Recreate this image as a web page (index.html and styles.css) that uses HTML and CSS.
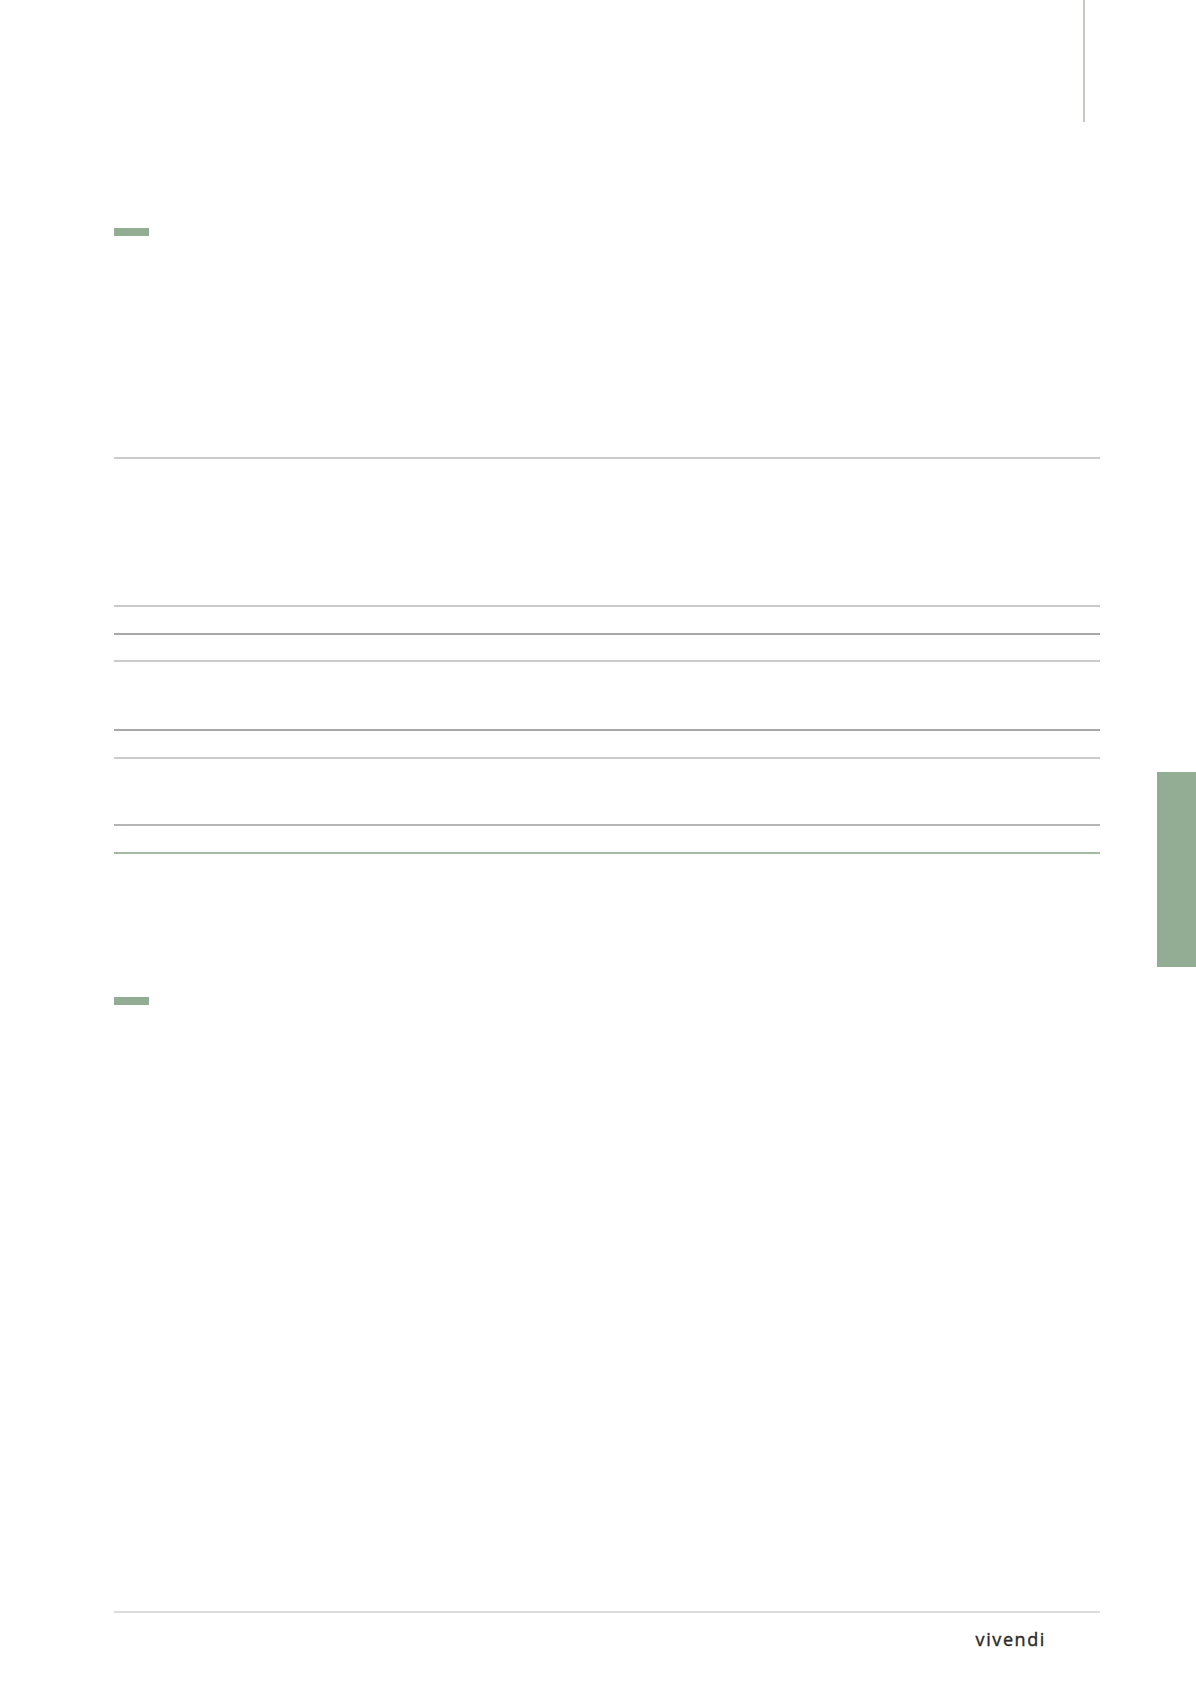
FILE: index.html
```html
<!DOCTYPE html>
<html lang="fr">
<head>
<meta charset="utf-8">
<title>Vivendi</title>
<link rel="stylesheet" href="styles.css">
</head>
<body>
<div class="page">
  <header class="top">
    <div class="top-rule"></div>
  </header>
  <div class="body">
    <main class="content">
      <div class="accent accent-first"></div>
      <div class="table">
        <div class="row row-head"></div>
        <div class="row row-sm line-dark"></div>
        <div class="row row-xs line-light"></div>
        <div class="row row-lg line-dark"></div>
        <div class="row row-sm line-light"></div>
        <div class="row row-lg2 line-mid"></div>
        <div class="row row-sm line-green"></div>
      </div>
      <div class="accent accent-second"></div>
      <footer class="footer">
        <span class="logo">vivendi</span>
      </footer>
    </main>
    <aside class="side">
      <div class="tab"></div>
    </aside>
  </div>
</div>
</body>
</html>
```
FILE: styles.css
```css
html, body {
  margin: 0;
  padding: 0;
  background: #ffffff;
}

.page {
  width: 1196px;
  min-height: 1692px;
  font-family: "Open Sans", "Liberation Sans", sans-serif;
}

.top {
  height: 122px;
  display: flex;
}

.top-rule {
  margin-left: 1083px;
  width: 2px;
  height: 122px;
  background: #c9c9c3;
}

.body {
  display: flex;
}

.content {
  margin-left: 114px;
  width: 986px;
  display: flex;
  flex-direction: column;
}

.accent {
  width: 35px;
  height: 8px;
  background: #93ac94;
}

.accent-first {
  margin-top: 106px;
}

.table {
  margin-top: 221px;
  border-top: 2px solid #cbcbcb;
  display: flex;
  flex-direction: column;
}

.row {
  border-bottom: 2px solid #c9c9c9;
}

.row-head {
  height: 146px;
}

.row-sm {
  height: 26px;
}

.row-xs {
  height: 25px;
}

.row-lg {
  height: 67px;
}

.row-lg2 {
  height: 65px;
}

.line-dark { border-bottom-color: #a8a8a8; }
.line-light { border-bottom-color: #cbcbcb; }
.line-mid { border-bottom-color: #b3b6b3; }
.line-green { border-bottom-color: #a2bba2; }

.accent-second {
  margin-top: 143px;
}

.footer {
  margin-top: 606px;
  border-top: 2px solid #dcdcdc;
  display: flex;
  justify-content: flex-end;
  padding-top: 15px;
  padding-right: 54px;
}

.logo {
  font-family: "Open Sans", "Liberation Sans", sans-serif;
  font-size: 18px;
  line-height: 22px;
  letter-spacing: 1.6px;
  color: #2b2a28;
  font-weight: 400;
  -webkit-text-stroke: 0.4px #2b2a28;
}

.side {
  margin-left: 57px;
  width: 39px;
}

.tab {
  margin-top: 650px;
  height: 195px;
  background: #93ac94;
}
```
